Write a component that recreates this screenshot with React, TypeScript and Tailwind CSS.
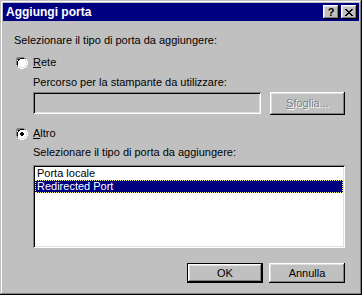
import React from "react";

const raised =
  "shadow-[inset_-1px_-1px_#000,inset_1px_1px_#fff,inset_-2px_-2px_#808080,inset_2px_2px_#dfdfdf]";
const sunken =
  "shadow-[inset_1px_1px_#808080,inset_-1px_-1px_#fff,inset_2px_2px_#000,inset_-2px_-2px_#dfdfdf]";

function Radio({ checked }: { checked?: boolean }) {
  return (
    <svg width="12" height="12" viewBox="0 0 12 12" className="shrink-0">
      {/* outer dark gray (top-left) */}
      <path d="M4 0h4v1h2v1h1v2h1v4h-1v2h-1v1h-2v1h-4v-1h-2v-1h-1v-2h-1v-4h1v-2h1v-1h2z" fill="#fff" />
      <path d="M4 0h4v1h2v1h-2v-1h-4v1h-2v1h-1v2h-1v-4h1v-2h1v-1h2z M0 4h1v4h-1z M1 8h1v2h-1z" fill="#808080" />
      <path d="M4 1h4v1h-4v1h-1v1h-1v4h-1v-4h1v-2h2z M2 2h1v1h-1z" fill="#000" />
      <path d="M10 2h1v2h-1z M11 4h1v4h-1z M10 8h1v2h-1z M8 10h2v1h-2z M4 11h4v1h-4z M2 10h2v1h-2z" fill="#fff" />
      <path d="M9 2h1v2h-1z M10 4h1v4h-1z M9 8h1v2h-1z M8 9h1v1h-1z M4 10h4v1h-4z M3 9h1v1h-1z" fill="#dfdfdf" />
      {checked && <path d="M5 4h2v1h1v2h-1v1h-2v-1h-1v-2h1z" fill="#000" />}
    </svg>
  );
}

export default function App() {
  return (
    <div
      className="w-[362px] h-[295px] bg-[#c0c0c0] p-[3px] flex flex-col text-[11px] leading-[13px] text-black shadow-[inset_-1px_-1px_#000,inset_1px_1px_#c0c0c0,inset_-2px_-2px_#808080,inset_2px_2px_#fff]"
      style={{ fontFamily: '"Liberation Sans", Arial, sans-serif' }}
    >
      {/* Title bar */}
      <div className="h-[18px] bg-[#000080] flex items-center pl-[3px] pr-[2px]">
        <span className="text-white font-bold text-[12px] leading-[14px] flex-1">Aggiungi porta</span>
        <div className="flex gap-[2px]">
          <div className={`w-[16px] h-[14px] bg-[#c0c0c0] ${raised} flex items-center justify-center`}>
            <span className="font-bold text-[11px] leading-[11px] text-black">?</span>
          </div>
          <div className={`w-[16px] h-[14px] bg-[#c0c0c0] ${raised} flex items-center justify-center`}>
            <svg width="8" height="7" viewBox="0 0 8 7">
              <path d="M0 0h2v1h1v1h2v-1h1v-1h2v1h-1v1h-1v1h-1v1h1v1h1v1h1v1h-2v-1h-1v-1h-2v1h-1v1h-2v-1h1v-1h1v-1h1v-1h-1v-1h-1v-1h-1z" fill="#000" />
            </svg>
          </div>
        </div>
      </div>

      {/* Body */}
      <div className="flex-1 flex flex-col pl-[11px] pr-[14px]">
        <div className="mt-[13px]">Selezionare il tipo di porta da aggiungere:</div>

        <div className="mt-[9px] flex items-center h-[13px] pl-[2px]">
          <Radio />
          <span className="ml-[5px]">
            <span className="underline">R</span>ete
          </span>
        </div>

        <div className="mt-[7px] ml-[19px]">Percorso per la stampante da utilizzare:</div>

        <div className="mt-[3px] ml-[19px] flex items-start">
          <div className={`w-[228px] h-[22px] bg-[#c0c0c0] ${sunken}`} />
          <div
            className={`ml-[9px] w-[75px] h-[23px] bg-[#c0c0c0] ${raised} flex items-center justify-center text-[#808080] [text-shadow:1px_1px_#fff]`}
          >
            <span>
              <span className="underline">S</span>foglia...
            </span>
          </div>
        </div>

        <div className="mt-[12px] flex items-center h-[13px] pl-[2px]">
          <Radio checked />
          <span className="ml-[5px]">
            <span className="underline">A</span>ltro
          </span>
        </div>

        <div className="mt-[6px] ml-[19px]">Selezionare il tipo di porta da aggiungere:</div>

        <div className={`mt-[6px] ml-[19px] h-[83px] bg-white ${sunken} p-[2px]`}>
          <div className="h-[13px] pl-[2px] leading-[13px]">Porta locale</div>
          <div className="h-[13px] bg-[#000080] text-white border border-dotted border-[#ffff7f] pl-[1px] leading-[11px]">
            Redirected Port
          </div>
        </div>

        <div className="mt-[15px] flex justify-end gap-[6px]">
          <div className="w-[76px] h-[20px] bg-[#c0c0c0] border border-black flex">
            <div className={`flex-1 ${raised} flex items-center justify-center`}>OK</div>
          </div>
          <div className={`w-[76px] h-[20px] bg-[#c0c0c0] ${raised} flex items-center justify-center`}>
            Annulla
          </div>
        </div>
      </div>
    </div>
  );
}
